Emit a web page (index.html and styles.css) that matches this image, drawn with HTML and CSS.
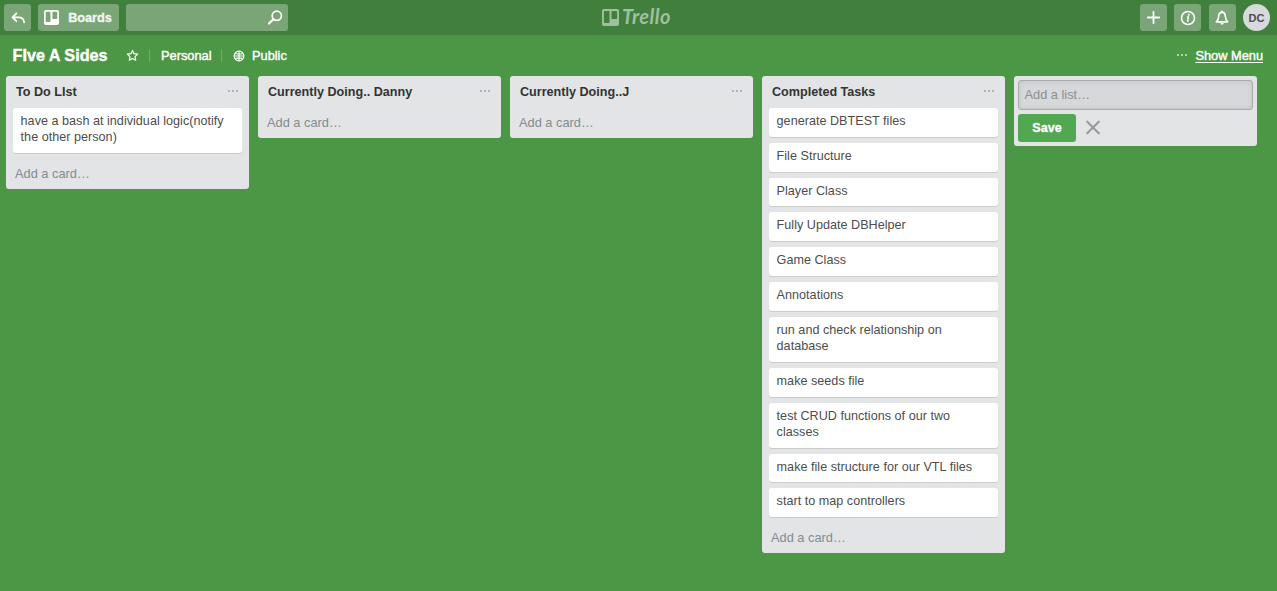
FILE: index.html
```html
<!DOCTYPE html>
<html lang="en">
<head>
<meta charset="utf-8">
<title>FIve A Sides | Trello</title>
<link rel="stylesheet" href="styles.css">
</head>
<body>
<header class="topbar">
  <div class="topbar-side">
    <a class="btn btn-back"><svg width="16" height="16" viewBox="0 0 16 16"><path d="M6.300 3.500 2.500 7.400l3.800 3.800M2.800 7.400h6c3.200 0 4.900 1.700 5.300 5" fill="none" stroke="#fff" stroke-width="1.800" stroke-linecap="round" stroke-linejoin="round"/></svg></a>
    <a class="btn btn-boards"><svg width="15" height="15" viewBox="0 0 15 15"><path fill="#fff" fill-rule="evenodd" d="M2 0h11q2 0 2 2v11q0 2-2 2H2q-2 0-2-2V2Q0 0 2 0ZM2.500 1.800q-.8 0-.8.800v8.600q0 .8.8.800h3.200q.8 0 .8-.800V2.600q0-.8-.8-.800ZM9.200 1.800q-.8 0-.8.800v5.600q0 .8.8.800h3.200q.8 0 .8-.800V2.600q0-.8-.8-.800Z"/></svg><span class="btn-label">Boards</span></a>
    <div class="search"><svg width="16" height="16" viewBox="0 0 16 16"><circle cx="9.800" cy="5.800" r="4.600" fill="none" stroke="#fff" stroke-width="1.700"/><path d="M6.400 9.200 2 13.600" stroke="#fff" stroke-width="2.100" stroke-linecap="round"/></svg></div>
  </div>
  <div class="logo">
    <svg width="17" height="17" viewBox="0 0 17 17"><path fill="#a0bf9f" fill-rule="evenodd" d="M2 0h13q2 0 2 2v13q0 2-2 2H2q-2 0-2-2V2Q0 0 2 0ZM2.700 2q-.8 0-.8.800v10.400q0 .8.8.800h4q.8 0 .8-.800V2.800q0-.8-.8-.8ZM10.300 2q-.8 0-.8.800v6.400q0 .8.8.800h4q.8 0 .8-.800V2.800q0-.8-.8-.8Z"/></svg>
    <span class="logo-name">Trello</span>
  </div>
  <div class="topbar-side topbar-right">
    <a class="btn btn-icon"><svg width="15" height="15" viewBox="0 0 15 15"><path d="M7.500 1.800v11.400M1.800 7.500h11.400" stroke="#fff" stroke-width="1.800" stroke-linecap="round"/></svg></a>
    <a class="btn btn-icon"><svg width="16" height="16" viewBox="0 0 16 16"><circle cx="8" cy="8" r="6.500" fill="none" stroke="#fff" stroke-width="1.500"/><circle cx="8.800" cy="4.700" r="1" fill="#fff"/><path d="M7.100 7h1.300l-.8 4h1" fill="none" stroke="#fff" stroke-width="1.400"/></svg></a>
    <a class="btn btn-icon"><svg width="16" height="16" viewBox="0 0 16 16"><path d="M8 2.400c-2 0-3.200 1.500-3.300 3.700-.1 3-.7 4.300-2.400 5.800h11.400c-1.700-1.500-2.300-2.800-2.400-5.800C11.200 3.900 10 2.400 8 2.400Z" fill="none" stroke="#fff" stroke-width="1.600" stroke-linejoin="round"/><path d="M6.200 12.700h3.600q-.3 2-1.800 2t-1.800-2Z" fill="#fff"/><circle cx="8" cy="1.600" r="1.100" fill="#fff"/></svg></a>
    <span class="avatar">DC</span>
  </div>
</header>
<nav class="boardbar">
  <h1 class="board-name">FIve A Sides</h1>
  <svg class="star" width="13" height="13" viewBox="0 0 13 13"><path d="m6.500 1.400 1.500 3.300 3.700.4-2.700 2.500.7 3.600-3.200-1.800-3.200 1.800.7-3.600L1.300 5.100 5 4.700Z" fill="none" stroke="#fff" stroke-width="1.200" stroke-linejoin="round"/></svg>
  <span class="divider"></span>
  <a class="bar-link personal">Personal</a>
  <span class="divider"></span>
  <svg class="globe" width="12" height="12" viewBox="0 0 12 12"><g fill="none" stroke="#fff" stroke-width="1.100"><circle cx="6" cy="6" r="4.900"/><path d="M6 1v10M1 6h10M2.300 3.400q3.700 1.500 7.400 0M2.300 8.600q3.700-1.500 7.400 0"/></g></svg>
  <a class="bar-link public">Public</a>
  <span class="menu-dots dots"><i></i><i></i><i></i></span>
  <a class="bar-link show-menu">Show Menu</a>
</nav>
<main class="board">
  <section class="list">
    <header class="list-head"><h2>To Do LIst</h2><span class="dots"><i></i><i></i><i></i></span></header>
    <div class="cards">
      <article class="card">have a bash at individual logic(notify<br>the other person)</article>
    </div>
    <a class="add-card">Add a card…</a>
  </section>
  <section class="list">
    <header class="list-head"><h2>Currently Doing.. Danny</h2><span class="dots"><i></i><i></i><i></i></span></header>
    <a class="add-card">Add a card…</a>
  </section>
  <section class="list">
    <header class="list-head"><h2>Currently Doing..J</h2><span class="dots"><i></i><i></i><i></i></span></header>
    <a class="add-card">Add a card…</a>
  </section>
  <section class="list">
    <header class="list-head"><h2>Completed Tasks</h2><span class="dots"><i></i><i></i><i></i></span></header>
    <div class="cards">
      <article class="card">generate DBTEST files</article>
      <article class="card">File Structure</article>
      <article class="card">Player Class</article>
      <article class="card">Fully Update DBHelper</article>
      <article class="card">Game Class</article>
      <article class="card">Annotations</article>
      <article class="card">run and check relationship on<br>database</article>
      <article class="card">make seeds file</article>
      <article class="card">test CRUD functions of our two<br>classes</article>
      <article class="card">make file structure for our VTL files</article>
      <article class="card">start to map controllers</article>
    </div>
    <a class="add-card">Add a card…</a>
  </section>
  <form class="add-list">
    <div class="list-input">Add a list…</div>
    <div class="form-actions">
      <span class="save">Save</span>
      <svg width="16" height="16" viewBox="0 0 16 16"><path d="m2.200 1.700 11.600 11.600M13.800 1.700 2.200 13.300" stroke="#999" stroke-width="2.100" stroke-linecap="round"/></svg>
    </div>
  </form>
</main>
</body>
</html>
```
FILE: styles.css
```css
* { box-sizing: border-box; }
body {
  margin: 0;
  height: 591px;
  overflow: hidden;
  background: #4b9746;
  font-family: "Liberation Sans", Arial, sans-serif;
  font-size: 13px;
  color: #4d4d4d;
}
svg { display: block; flex: none; }
h1, h2 { margin: 0; }

.topbar {
  display: grid;
  grid-template-columns: 1fr auto 1fr;
  align-items: center;
  height: 35px;
  padding: 0 7px 0 4px;
  background: #407f3c;
}
.topbar-side { display: flex; align-items: center; gap: 7px; }
.topbar-right { justify-content: flex-end; gap: 7.3px; }
.btn {
  display: flex;
  align-items: center;
  justify-content: center;
  height: 27px;
  border-radius: 3px;
  background: #79a577;
  color: #fff;
}
.btn-back { width: 27px; }
.btn-icon { width: 27px; }
.btn-boards { width: 81px; gap: 9px; padding-right: 1px; }
.btn-label { font-weight: bold; font-size: 12.7px; color: #f3f8f3; -webkit-text-stroke: .3px #f3f8f3; }
.search {
  display: flex;
  align-items: center;
  justify-content: flex-end;
  width: 162px;
  height: 27px;
  padding-right: 5px;
  border-radius: 3px;
  background: #79a577;
}
.logo { display: flex; align-items: center; gap: 3px; color: #a0bf9f; }
.logo-name {
  width: 50px;
  margin-top: -3px;
  font: italic bold 20px/24px Lato, sans-serif;
  letter-spacing: .5px;
}
.avatar {
  width: 27px;
  height: 27px;
  border-radius: 50%;
  background: #d6dadc;
  color: #4d4d4d;
  font-size: 11px;
  font-weight: bold;
  line-height: 28px;
  text-align: center;
}

.boardbar {
  display: flex;
  align-items: center;
  height: 41px;
  padding: 0 14px 0 12.5px;
  color: #fff;
}
.board-name {
  width: 95.5px;
  margin: -2px 18px 0 0;
  font-size: 16.2px;
  line-height: 20px;
  white-space: nowrap;
  -webkit-text-stroke: .4px #fff;
}
.star { margin-right: 10px; }
.divider { width: 1px; height: 13px; background: #6fab6b; }
.bar-link { white-space: nowrap; font-size: 12.8px; -webkit-text-stroke: .4px #fff; }
.personal { width: 50px; margin: 0 10px 0 11px; }
.globe { margin: 0 7px 0 11px; }
.dots { display: flex; gap: 2px; }
.dots i { width: 2px; height: 2px; border-radius: 1px; background: #a0a3a4; }
.menu-dots { margin: -1px 8px 0 auto; }
.menu-dots i { background: #d2e5d1; }
.show-menu { text-decoration: underline; text-underline-offset: 2px; }

.board { display: flex; align-items: flex-start; gap: 9px; padding-left: 6px; }
.list {
  width: 243px;
  flex: none;
  padding: 0 7px;
  border-radius: 3px;
  background: #e2e4e6;
}
.list-head {
  display: flex;
  align-items: center;
  justify-content: space-between;
  height: 31px;
  padding: 0 4px 0 3px;
}
.list-head .dots { margin-top: -1px; }
.list-head h2 { font-size: 12.6px; line-height: 16px; color: #333; }
.cards {
  display: flex;
  flex-direction: column;
  gap: 6px;
  padding: 1px 0 5px;
}
.card {
  padding: 5px 7px 7.6px 7.6px;
  border-radius: 3px;
  background: #fff;
  box-shadow: 0 1px 0 #ccc;
  line-height: 16.2px;
  font-size: 12.6px;
  letter-spacing: .02px;
  white-space: nowrap;
}
.add-card {
  display: block;
  height: 31px;
  padding-left: 2px;
  line-height: 31px;
  font-size: 12.8px;
  color: #838c91;
}

.add-list {
  width: 243px;
  height: 70px;
  padding: 4px;
  border-radius: 3px;
  background: #e2e4e6;
}
.list-input {
  height: 30px;
  padding-left: 5.5px;
  border: 1px solid #a9abac;
  border-radius: 3px;
  background: #d6d8da;
  box-shadow: inset 0 0 5px #bfc1c2;
  line-height: 28px;
  font-size: 12.8px;
  color: #8c8f91;
}
.form-actions { display: flex; align-items: center; gap: 9px; margin-top: 4px; }
.save {
  width: 58px;
  height: 28px;
  border-radius: 3px;
  background: #51a851;
  color: #fff;
  font-size: 12.6px;
  font-weight: bold;
  -webkit-text-stroke: .3px #fff;
  line-height: 28px;
  text-align: center;
}
```
